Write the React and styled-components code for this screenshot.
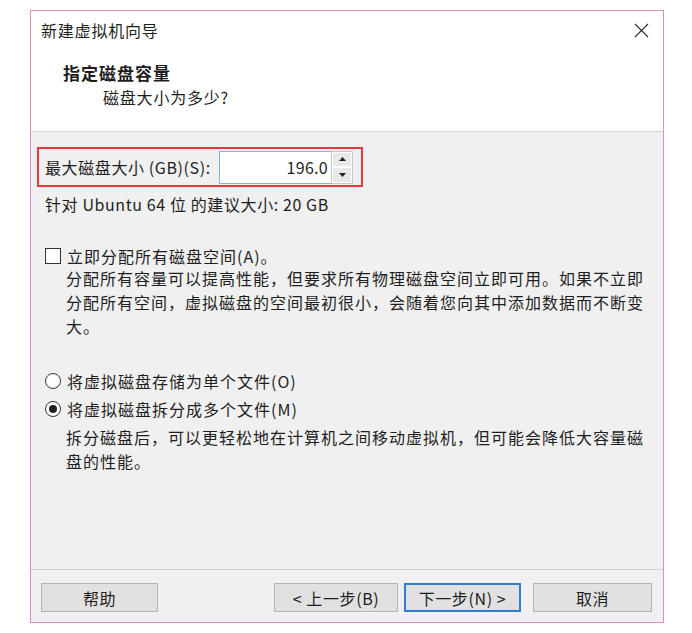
import React from "react";
import styled, { createGlobalStyle } from "styled-components";

const Global = createGlobalStyle`
  html, body { margin: 0; padding: 0; background: #fff; }
  body { font-family: "Noto Sans CJK SC", "Noto Sans", sans-serif; color: #1e1e1e; }
`;

const Page = styled.div`
  width: 692px;
  height: 633px;
  padding: 10px 0 0 30px;
  box-sizing: border-box;
`;

const Window = styled.div`
  width: 634px;
  height: 613px;
  box-sizing: border-box;
  border: 1px solid #dc8fc4;
  display: flex;
  flex-direction: column;
  background: #f0f0f0;
`;

const Header = styled.div`
  background: #fff;
  height: 120px;
  border-bottom: 1px solid #d6d6d6;
  display: flex;
  flex-direction: column;
  flex-shrink: 0;
`;

const TitleBar = styled.div`
  height: 38px;
  display: flex;
  align-items: center;
  justify-content: space-between;
  padding: 0 14px 0 10px;
  font-size: 16px;
  letter-spacing: 0.8px;
`;

const Close = styled.svg`
  width: 15px;
  height: 15px;
`;

const HeadTitle = styled.div`
  margin: 13px 0 0 32px;
  font-size: 17px;
  font-weight: 700;
  letter-spacing: 1px;
  line-height: 22px;
`;

const HeadSub = styled.div`
  margin: 2px 0 0 72px;
  font-size: 16px;
  letter-spacing: 0.8px;
  line-height: 22px;
`;

const Body = styled.div`
  flex: 1;
  padding: 15px 0 0 6px;
  display: flex;
  flex-direction: column;
  font-size: 16px;
  letter-spacing: 1px;
  border-bottom: 1px solid #d0d0d0;
`;

const Highlight = styled.div`
  width: 326px;
  height: 40px;
  box-sizing: border-box;
  border: 2px solid #e8383f;
  display: flex;
  align-items: center;
  padding-left: 6px;
`;

const FieldLabel = styled.span`
  white-space: nowrap;
  width: 174px;
  letter-spacing: 0.6px;
`;

const Spin = styled.div`
  display: flex;
  height: 33px;
`;

const NumInput = styled.div`
  width: 112px;
  box-sizing: border-box;
  border: 1px solid #7fb3e8;
  border-right: none;
  background: #fff;
  display: flex;
  align-items: center;
  justify-content: flex-end;
  padding-right: 3px;
  letter-spacing: 0.3px;
`;

const Arrows = styled.div`
  width: 22px;
  display: flex;
  flex-direction: column;
  border: 1px solid #c8c8c8;
  box-sizing: border-box;
  background: #fff;
`;

const ArrowBtn = styled.div`
  flex: 1;
  display: flex;
  align-items: center;
  justify-content: center;
  background: #e8e8e8;
  border: 1px solid #fff;
`;

const Line = styled.div`
  margin: ${(p) => p.$mt || 0}px 0 0 8px;
  line-height: 24px;
  white-space: nowrap;
  letter-spacing: 0.6px;
`;

const Option = styled.div`
  display: flex;
  align-items: center;
  margin: ${(p) => p.$mt || 0}px 0 0 8px;
  height: 20px;
  line-height: 20px;
  white-space: nowrap;
`;

const Box = styled.span`
  width: 14px;
  height: 14px;
  border: 1px solid #333;
  background: #fff;
  margin-right: 6px;
  flex-shrink: 0;
`;

const Radio = styled.span`
  width: 14px;
  height: 14px;
  border: 1px solid #333;
  border-radius: 50%;
  background: #fff;
  margin-right: 6px;
  flex-shrink: 0;
  display: flex;
  align-items: center;
  justify-content: center;
  &::after {
    content: "";
    width: 8px;
    height: 8px;
    border-radius: 50%;
    background: ${(p) => (p.$on ? "#222" : "transparent")};
  }
`;

const Desc = styled.div`
  margin: ${(p) => p.$mt || 0}px 0 0 29px;
  line-height: 24px;
  width: 584px;
`;

const Footer = styled.div`
  height: 52px;
  flex-shrink: 0;
  display: flex;
  align-items: flex-start;
  padding: 13px 0 0 10px;
  box-sizing: border-box;
`;

const Button = styled.div`
  width: ${(p) => p.$w}px;
  height: 29px;
  box-sizing: border-box;
  margin-left: ${(p) => p.$ml || 0}px;
  background: #e1e1e1;
  border: ${(p) => (p.$default ? "2px solid #2b7fd0" : "1px solid #b4b4b4")};
  display: flex;
  align-items: center;
  justify-content: center;
  font-size: 16px;
  letter-spacing: 0.6px;
`;

export default function App() {
  return (
    <Page>
      <Global />
      <Window>
        <Header>
          <TitleBar>
            <span>新建虚拟机向导</span>
            <Close viewBox="0 0 15 15">
              <path d="M1 1 L14 14 M14 1 L1 14" stroke="#333" strokeWidth="1.2" />
            </Close>
          </TitleBar>
          <HeadTitle>指定磁盘容量</HeadTitle>
          <HeadSub>磁盘大小为多少?</HeadSub>
        </Header>
        <Body>
          <Highlight>
            <FieldLabel>最大磁盘大小 (GB)(S):</FieldLabel>
            <Spin>
              <NumInput>196.0</NumInput>
              <Arrows>
                <ArrowBtn>
                  <svg width="7" height="4" viewBox="0 0 7 4"><path d="M0 4 L3.5 0 L7 4 Z" fill="#222" /></svg>
                </ArrowBtn>
                <ArrowBtn>
                  <svg width="7" height="4" viewBox="0 0 7 4"><path d="M0 0 L3.5 4 L7 0 Z" fill="#222" /></svg>
                </ArrowBtn>
              </Arrows>
            </Spin>
          </Highlight>
          <Line $mt={5}>针对 Ubuntu 64 位 的建议大小: 20 GB</Line>
          <Option $mt={30}>
            <Box />
            立即分配所有磁盘空间(A)。
          </Option>
          <Desc $mt={0}>
            分配所有容量可以提高性能，但要求所有物理磁盘空间立即可用。如果不立即分配所有空间，虚拟磁盘的空间最初很小，会随着您向其中添加数据而不断变大。
          </Desc>
          <Option $mt={33}>
            <Radio />
            将虚拟磁盘存储为单个文件(O)
          </Option>
          <Option $mt={8}>
            <Radio $on />
            将虚拟磁盘拆分成多个文件(M)
          </Option>
          <Desc $mt={6}>
            拆分磁盘后，可以更轻松地在计算机之间移动虚拟机，但可能会降低大容量磁盘的性能。
          </Desc>
        </Body>
        <Footer>
          <Button $w={117}>帮助</Button>
          <Button $w={124} $ml={116}>&lt; 上一步(B)</Button>
          <Button $w={117} $ml={6} $default>下一步(N) &gt;</Button>
          <Button $w={119} $ml={12}>取消</Button>
        </Footer>
      </Window>
    </Page>
  );
}
